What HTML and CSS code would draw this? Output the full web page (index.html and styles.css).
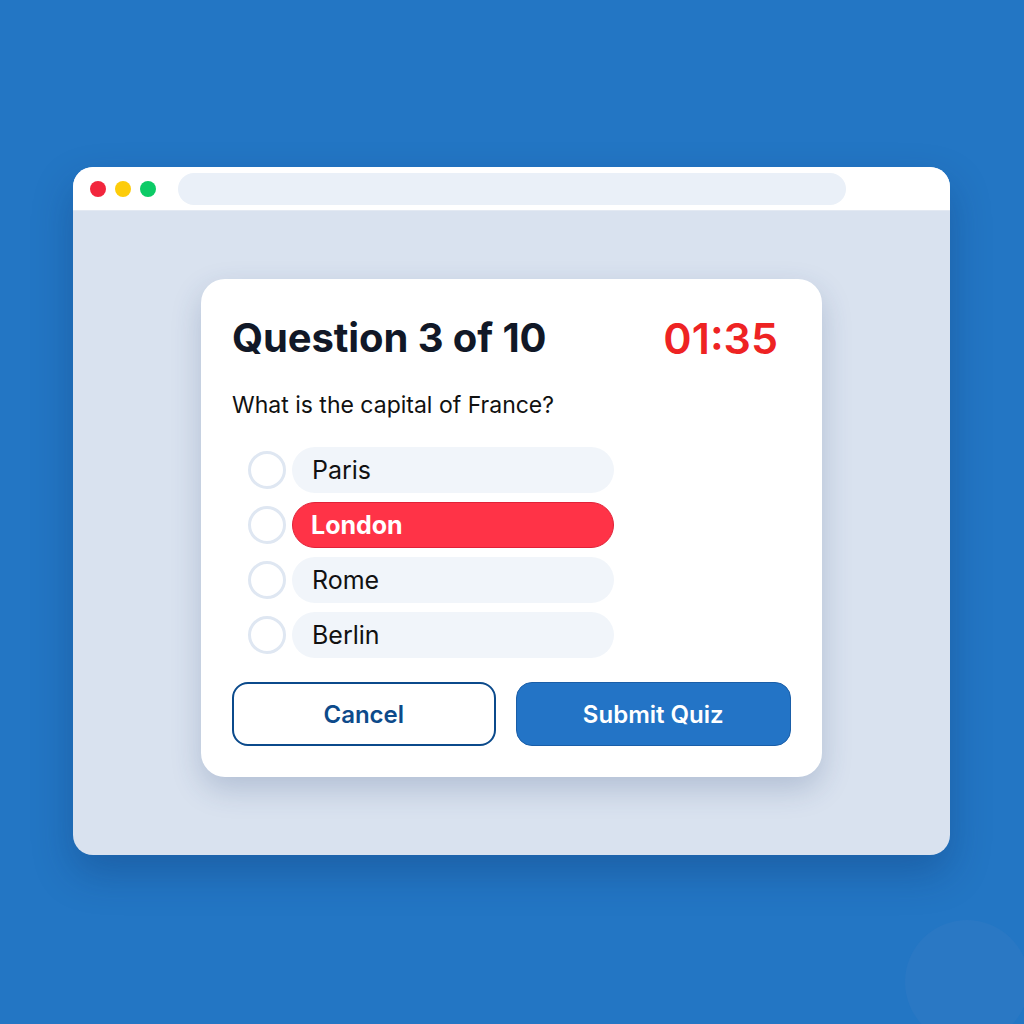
FILE: index.html
```html
<!DOCTYPE html>
<html lang="en">
<head>
<meta charset="utf-8">
<title>Quiz</title>
<link rel="stylesheet" href="styles.css">
</head>
<body>
<div class="bg-circle"></div>
<div class="window">
  <div class="titlebar">
    <div class="lights">
      <span class="light red"></span>
      <span class="light yellow"></span>
      <span class="light green"></span>
    </div>
    <div class="address"></div>
  </div>
  <div class="content">
    <div class="card">
      <div class="card-head">
        <h1 class="title">Question 3 of 10</h1>
        <div class="timer">01:35</div>
      </div>
      <p class="question">What is the capital of France?</p>
      <div class="options">
        <div class="option"><span class="radio"></span><span class="pill">Paris</span></div>
        <div class="option"><span class="radio"></span><span class="pill selected">London</span></div>
        <div class="option"><span class="radio"></span><span class="pill">Rome</span></div>
        <div class="option"><span class="radio"></span><span class="pill">Berlin</span></div>
      </div>
      <div class="actions">
        <button class="btn cancel">Cancel</button>
        <button class="btn submit">Submit Quiz</button>
      </div>
    </div>
  </div>
</div>
</body>
</html>
```

FILE: styles.css
```css
html, body {
  margin: 0;
  padding: 0;
}
body {
  width: 1024px;
  height: 1024px;
  background: #2376c4;
  font-family: Inter, "Noto Sans", sans-serif;
  overflow: hidden;
  position: relative;
}
.bg-circle {
  position: absolute;
  left: 905px;
  top: 920px;
  width: 124px;
  height: 124px;
  border-radius: 50%;
  background: #2a78c4;
}
.window {
  position: relative;
  margin: 167px 0 0 73px;
  width: 877px;
  height: 688px;
  border-radius: 20px;
  overflow: hidden;
  background: #d9e2ef;
  box-shadow: 0 18px 40px rgba(10, 40, 90, 0.28);
  display: flex;
  flex-direction: column;
}
.titlebar {
  height: 44px;
  background: #ffffff;
  display: flex;
  align-items: center;
  border-bottom: 1px solid #e3e9f2;
  box-sizing: border-box;
}
.lights {
  display: flex;
  gap: 9px;
  padding-left: 17px;
}
.light {
  width: 16px;
  height: 16px;
  border-radius: 50%;
}
.red { background: #f2263d; }
.yellow { background: #fdcc0a; }
.green { background: #0ccb66; }
.address {
  margin-left: 22px;
  width: 668px;
  height: 32px;
  border-radius: 16px;
  background: #eaf0f8;
}
.content {
  flex: 1;
  padding: 68px 0 0 128px;
}
.card {
  width: 621px;
  height: 498px;
  box-sizing: border-box;
  background: #ffffff;
  border-radius: 24px;
  box-shadow: 0 12px 30px rgba(40, 70, 120, 0.22);
  padding: 32px 31px 0 31px;
}
.card-head {
  display: flex;
  justify-content: space-between;
  align-items: center;
  padding-right: 13px;
}
.title {
  margin: 0;
  font-size: 40px;
  line-height: 54px;
  font-weight: 700;
  color: #111827;
  letter-spacing: -0.1px;
}
.timer {
  font-size: 43px;
  line-height: 54px;
  font-weight: 600;
  color: #ee2323;
}
.question {
  margin: 25px 0 0 0;
  font-size: 23px;
  line-height: 30px;
  color: #111111;
  font-weight: 400;
}
.options {
  margin-top: 27px;
  padding-left: 16px;
  display: flex;
  flex-direction: column;
  gap: 9px;
}
.option {
  display: flex;
  align-items: center;
  gap: 6px;
}
.radio {
  width: 32px;
  height: 32px;
  border-radius: 50%;
  border: 3px solid #dfe7f2;
  background: #fff;
}
.pill {
  width: 322px;
  height: 46px;
  box-sizing: border-box;
  border-radius: 23px;
  background: #f1f5fa;
  padding-left: 20px;
  display: flex;
  align-items: center;
  font-size: 25px;
  color: #111111;
}
.pill.selected {
  background: #ff3347;
  border: 1px solid #e02238;
  color: #ffffff;
  font-weight: 700;
  padding-left: 18px;
}
.actions {
  margin-top: 24px;
  display: flex;
  gap: 20px;
}
.btn {
  height: 64px;
  border-radius: 16px;
  font-family: inherit;
  font-size: 24px;
  font-weight: 600;
  box-sizing: border-box;
}
.cancel {
  width: 264px;
  background: #ffffff;
  border: 2px solid #0b4a8b;
  color: #0d4a8a;
}
.submit {
  width: 276px;
  background: #2374c6;
  border: 1.5px solid #1a5ea8;
  color: #ffffff;
}
```
